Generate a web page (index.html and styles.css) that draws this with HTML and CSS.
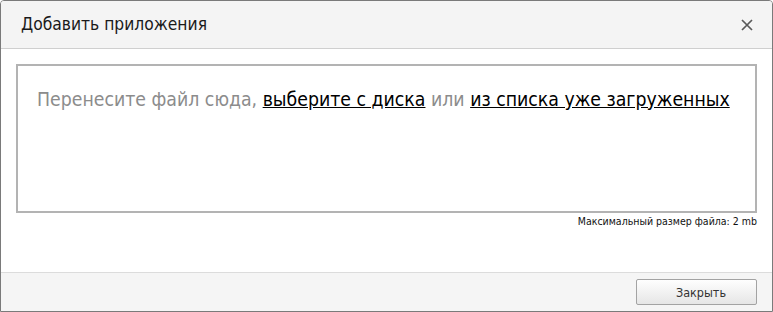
FILE: index.html
```html
<!DOCTYPE html>
<html lang="ru">
<head>
<meta charset="utf-8">
<title>Добавить приложения</title>
<link rel="stylesheet" href="styles.css">
</head>
<body>
<div class="dialog">
  <div class="header">
    <span class="title">Добавить приложения</span>
    <span class="close" aria-label="Закрыть">
      <svg width="12" height="12" viewBox="0 0 12 12"><path d="M1 1 L11 11 M11 1 L1 11" stroke="#5a5a5a" stroke-width="1.7" fill="none"/></svg>
    </span>
  </div>
  <div class="body">
    <div class="dropzone">
      <span class="hint">Перенесите файл сюда, </span><a class="link" href="#">выберите с диска</a><span class="hint"> или </span><a class="link" href="#">из списка уже загруженных</a>
    </div>
    <div class="note">Максимальный размер файла: 2 mb</div>
  </div>
  <div class="footer">
    <button class="btn" type="button">Закрыть</button>
  </div>
</div>
</body>
</html>
```
FILE: styles.css
```css
html, body {
  margin: 0;
  padding: 0;
  background: #ffffff;
}
body {
  font-family: "DejaVu Sans Condensed", "DejaVu Sans", sans-serif;
}
.dialog {
  width: 773px;
  height: 312px;
  box-sizing: border-box;
  border: 1px solid #7a7a7a;
  border-radius: 4px 4px 0 0;
  display: flex;
  flex-direction: column;
  overflow: hidden;
  background: #fff;
}
.header {
  height: 48px;
  box-sizing: border-box;
  background: #f4f4f4;
  border-bottom: 1px solid #cfcfcf;
  display: flex;
  align-items: center;
  justify-content: space-between;
  padding: 0 19px 0 20px;
}
.title {
  font-size: 17.3px;
  color: #1a1a1a;
  padding-bottom: 1px;
}
.close {
  display: flex;
  width: 12px;
  height: 12px;
}
.body {
  flex: 1;
  padding: 15px 15px 0 15px;
}
.dropzone {
  height: 149px;
  box-sizing: border-box;
  border: 2px solid #b3b3b3;
  padding: 22px 19px 0 19px;
  font-size: 19.3px;
  line-height: 24px;
  white-space: nowrap;
}
.hint {
  color: #8c8c8c;
}
.link {
  color: #000;
  text-decoration: underline;
}
.note {
  text-align: right;
  font-size: 10.5px;
  line-height: 13px;
  margin-top: 2px;
  color: #111;
}
.footer {
  height: 39px;
  box-sizing: border-box;
  border-top: 1px solid #dcdcdc;
  background: #f5f5f5;
  display: flex;
  justify-content: flex-end;
  align-items: flex-start;
  padding: 6px 15px 0 0;
}
.btn {
  width: 121px;
  height: 26px;
  box-sizing: border-box;
  border: 1px solid #a3a3a3;
  border-radius: 2px;
  background: linear-gradient(#fefefe, #e6e6e6);
  font-family: "DejaVu Sans Condensed", "DejaVu Sans", sans-serif;
  font-size: 12.5px;
  color: #333;
  padding: 0 0 0 9px;
}
```
